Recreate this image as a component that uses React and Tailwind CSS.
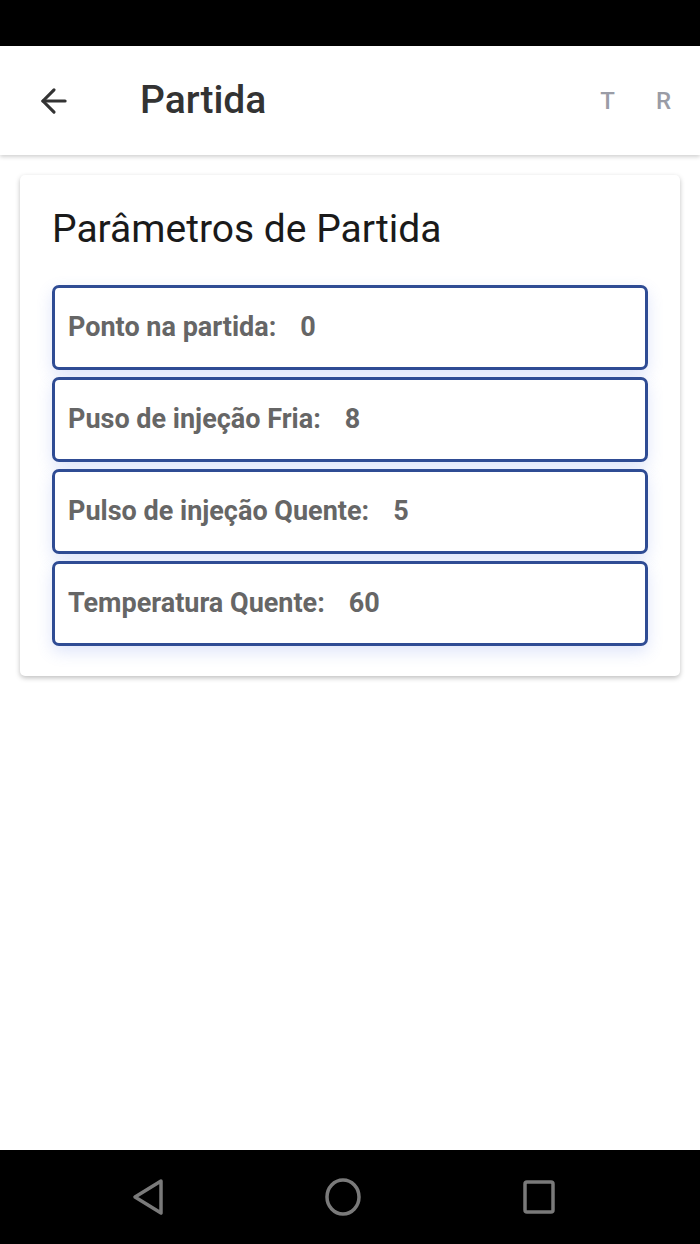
import { ArrowLeft } from "lucide-react";

const params = [
  { label: "Ponto na partida:", value: "0" },
  { label: "Puso de injeção Fria:", value: "8" },
  { label: "Pulso de injeção Quente:", value: "5" },
  { label: "Temperatura Quente:", value: "60" },
];

const App = () => {
  return (
    <div className="h-[1244px] w-[700px] flex flex-col bg-white font-['Roboto',sans-serif]">
      <div className="h-[46px] bg-black" />

      <header className="h-[109px] flex items-center bg-white shadow-[0_2px_4px_rgba(0,0,0,0.18)] relative z-10">
        <ArrowLeft className="ml-[35px] text-[#333]" size={38} strokeWidth={2} />
        <h1 className="ml-[67px] text-[39px] font-medium text-[#333] leading-none">Partida</h1>
        <div className="ml-auto mr-[29px] flex gap-[41px] text-[24px] font-medium text-[#9a9ca6]">
          <span>T</span>
          <span>R</span>
        </div>
      </header>

      <main className="flex-1 px-[20px] pt-[20px]">
        <div className="bg-white rounded-[5px] shadow-[0_2px_5px_rgba(0,0,0,0.25)] px-[32px] pt-[34px] pb-[30px]">
          <h2 className="text-[39px] text-[#1a1a1a] leading-[40px] mb-[36px]">Parâmetros de Partida</h2>

          <div className="flex flex-col gap-[7px]">
            {params.map((p) => (
              <div
                key={p.label}
                className="h-[85px] flex items-center px-[13px] border-[3px] border-[#2f4c94] rounded-[7px] bg-white shadow-[0_6px_16px_rgba(80,110,230,0.18)] text-[27px] font-bold text-[#666]"
              >
                <span>{p.label}</span>
                <span className="ml-[24px]">{p.value}</span>
              </div>
            ))}
          </div>
        </div>
      </main>

      <nav className="h-[94px] bg-black flex items-center">
        <svg className="ml-[131px]" width="34" height="40" viewBox="0 0 34 40" fill="none">
          <path d="M30 4 L4 20 L30 36 Z" stroke="#7a7a7a" strokeWidth="3.5" strokeLinejoin="round" />
        </svg>
        <svg className="ml-[159px]" width="38" height="40" viewBox="0 0 38 40" fill="none">
          <ellipse cx="19" cy="20" rx="16" ry="17" stroke="#7a7a7a" strokeWidth="3.5" />
        </svg>
        <svg className="ml-[160px]" width="36" height="36" viewBox="0 0 36 36" fill="none">
          <rect x="3" y="3" width="28" height="30" rx="2" stroke="#7a7a7a" strokeWidth="3.5" />
        </svg>
      </nav>
    </div>
  );
};

export default App;
